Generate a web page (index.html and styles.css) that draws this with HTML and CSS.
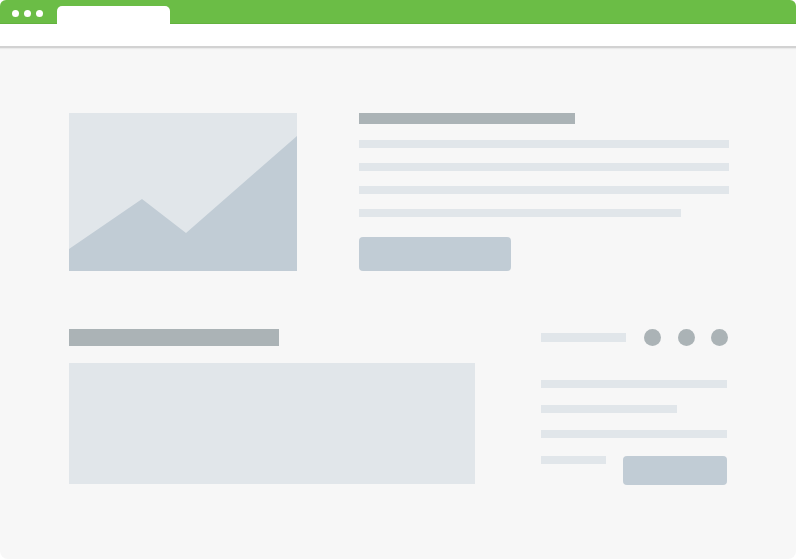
FILE: index.html
```html
<!DOCTYPE html>
<html lang="en">
<head>
  <meta charset="UTF-8">
  <meta name="viewport" content="width=device-width, initial-scale=1.0">
  <title>Wireframe</title>
  <link rel="stylesheet" href="styles.css">
</head>
<body>

<div class="window">
  <div class="titlebar">
    <div class="dots">
      <span></span><span></span><span></span>
    </div>
    <div class="tab"></div>
  </div>
  <div class="toolbar"></div>

  <main class="page">
    <!-- top block: picture + text -->
    <section class="hero">
      <svg class="hero-chart" width="228" height="158" viewBox="0 0 228 158">
        <rect width="228" height="158" fill="#e1e6ea"/>
        <polygon points="0,136 73,86 117,120 228,23 228,158 0,158" fill="#c1ccd5"/>
      </svg>
      <div class="hero-text">
        <div class="bar bar-title"></div>
        <div class="line"></div>
        <div class="line"></div>
        <div class="line"></div>
        <div class="line line-short"></div>
        <div class="btn btn-big"></div>
      </div>
    </section>

    <!-- bottom block -->
    <section class="lower">
      <div class="lower-main">
        <div class="bar bar-heading"></div>
        <div class="block"></div>
      </div>
      <div class="lower-side">
        <div class="side-top">
          <div class="line line-tiny"></div>
          <div class="circles">
            <span></span><span></span><span></span>
          </div>
        </div>
        <div class="line side-line"></div>
        <div class="line side-line side-line-short"></div>
        <div class="line side-line"></div>
        <div class="side-bottom">
          <div class="line line-mini"></div>
          <div class="btn btn-small"></div>
        </div>
      </div>
    </section>
  </main>
</div>

</body>
</html>
```

FILE: styles.css
```css
html, body {
  margin: 0;
  padding: 0;
  height: 100%;
}

body {
  background-color: #ffffff;
  font-family: 'Liberation Sans', Arial, sans-serif;
}

.window {
  height: 100vh;
  border-radius: 6px 6px 8px 8px;
  overflow: hidden;
  background-color: #f7f7f7;
  display: flex;
  flex-direction: column;
}

/* Browser chrome */
.titlebar {
  height: 24px;
  background-color: #6bbd46;
  border-bottom: 1px solid #63b23f;
  box-sizing: border-box;
  display: flex;
  align-items: flex-end;
  padding-left: 12px;
}

.dots {
  display: flex;
  gap: 5px;
  margin-bottom: 6px;
}

.dots span {
  width: 7px;
  height: 7px;
  border-radius: 50%;
  background-color: #fff;
}

.tab {
  width: 113px;
  height: 18px;
  margin-left: 14px;
  margin-bottom: -1px;
  background-color: #fff;
  border-radius: 5px 5px 0 0;
}

.toolbar {
  height: 22px;
  background-color: #fff;
  border-bottom: 2px solid #d2d2d2;
  box-shadow: 0 1px 1px rgba(0, 0, 0, 0.05);
}

/* Page content */
.page {
  flex: 1;
  padding: 65px 0 0 69px;
}

.hero {
  display: flex;
  gap: 62px;
}

.hero-chart {
  display: block;
  flex: none;
}

.hero-text {
  width: 370px;
}

.bar {
  background-color: #abb3b6;
}

.bar-title {
  width: 216px;
  height: 11px;
  margin-bottom: 16px;
}

.line {
  height: 8px;
  background-color: #e1e6ea;
}

.hero-text .line {
  margin-bottom: 15px;
}

.hero-text .line-short {
  width: 322px;
  margin-bottom: 20px;
}

.btn {
  background-color: #c1ccd5;
  border-radius: 4px;
}

.btn-big {
  width: 152px;
  height: 34px;
}

.lower {
  display: flex;
  gap: 66px;
  margin-top: 58px;
}

.lower-main {
  width: 406px;
}

.bar-heading {
  width: 210px;
  height: 17px;
  margin-bottom: 17px;
}

.block {
  height: 121px;
  background-color: #e1e6ea;
}

.lower-side {
  width: 186px;
}

.side-top {
  display: flex;
  align-items: center;
  height: 17px;
  margin-bottom: 34px;
}

.line-tiny {
  width: 85px;
  height: 9px;
}

.circles {
  display: flex;
  gap: 16.5px;
  margin-left: auto;
  margin-right: -1px;
}

.circles span {
  width: 17px;
  height: 17px;
  border-radius: 50%;
  background-color: #abb3b6;
}

.side-line {
  margin-bottom: 17px;
}

.side-line-short {
  width: 136px;
}

.side-bottom {
  display: flex;
  align-items: flex-start;
  padding-top: 1px;
}

.line-mini {
  width: 65px;
}

.btn-small {
  width: 104px;
  height: 29px;
  margin-left: auto;
}
```
